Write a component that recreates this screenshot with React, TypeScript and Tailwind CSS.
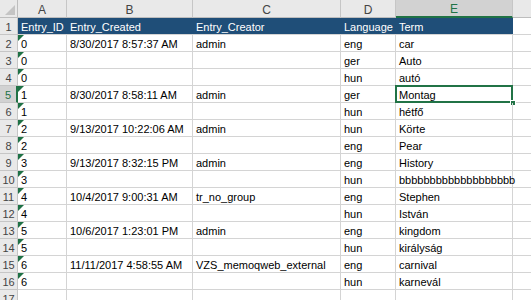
const cols = ['A', 'B', 'C', 'D', 'E']
const headers = ['Entry_ID', 'Entry_Created', 'Entry_Creator', 'Language', 'Term']

const rows: string[][] = [
  ['0', '8/30/2017 8:57:37 AM', 'admin', 'eng', 'car'],
  ['0', '', '', 'ger', 'Auto'],
  ['0', '', '', 'hun', 'autó'],
  ['1', '8/30/2017 8:58:11 AM', 'admin', 'ger', 'Montag'],
  ['1', '', '', 'hun', 'hétfő'],
  ['2', '9/13/2017 10:22:06 AM', 'admin', 'hun', 'Körte'],
  ['2', '', '', 'eng', 'Pear'],
  ['3', '9/13/2017 8:32:15 PM', 'admin', 'eng', 'History'],
  ['3', '', '', 'hun', 'bbbbbbbbbbbbbbbbbbb'],
  ['4', '10/4/2017 9:00:31 AM', 'tr_no_group', 'eng', 'Stephen'],
  ['4', '', '', 'hun', 'István'],
  ['5', '10/6/2017 1:23:01 PM', 'admin', 'eng', 'kingdom'],
  ['5', '', '', 'hun', 'királyság'],
  ['6', '11/11/2017 4:58:55 AM', 'VZS_memoqweb_external', 'eng', 'carnival'],
  ['6', '', '', 'hun', 'karnevál'],
]

const grid = 'grid grid-cols-[18px_49px_126px_148px_55px_117px_1fr]'
const cell = 'relative h-[17px] border-r border-b border-[#d4d4d4] px-[3px] flex items-end leading-[13px] whitespace-nowrap overflow-visible'

function ErrorFlag() {
  return (
    <svg className="absolute top-0 left-0" width="6" height="6" viewBox="0 0 6 6">
      <polygon points="0,0 6,0 0,6" fill="#1e7145" />
    </svg>
  )
}

function RowHeader({ n, selected }: { n: number; selected?: boolean }) {
  return (
    <div
      className={
        selected
          ? 'h-[17px] border-b border-r-2 border-b-[#c6c6c6] border-r-[#217346] bg-[#d2d2d2] text-[#217346] flex items-end justify-center leading-[13px]'
          : 'h-[17px] border-b border-r border-[#c6c6c6] bg-[#e9e9e9] text-[#444] flex items-end justify-center leading-[13px]'
      }
    >
      {n}
    </div>
  )
}

export default function App() {
  return (
    <div className="w-[531px] h-[300px] overflow-hidden bg-white font-['Liberation_Sans',Arial,sans-serif] text-[11px] text-black">
      {/* column letters */}
      <div className={grid}>
        <div className="relative h-[18px] border-r border-b border-[#bdbdbd] bg-[#e9e9e9]">
          <svg className="absolute right-[2px] bottom-[2px]" width="10" height="10" viewBox="0 0 10 10">
            <polygon points="10,0 10,10 0,10" fill="#c4c4c4" />
          </svg>
        </div>
        {cols.map((c) =>
          c === 'E' ? (
            <div
              key={c}
              className="h-[18px] border-r border-[#c6c6c6] border-b-2 border-b-[#217346] bg-[#d2d2d2] text-[#217346] flex items-center justify-center pt-[2px] text-[12px]"
            >
              {c}
            </div>
          ) : (
            <div
              key={c}
              className="h-[18px] border-r border-b border-[#c6c6c6] border-b-[#bdbdbd] bg-[#e9e9e9] text-[#444] flex items-center justify-center pt-[2px] text-[12px]"
            >
              {c}
            </div>
          )
        )}
        <div className="h-[18px] border-b border-[#bdbdbd] bg-[#e9e9e9]" />
      </div>

      {/* header row */}
      <div className={grid}>
        <RowHeader n={1} />
        {headers.map((h) => (
          <div
            key={h}
            className="h-[17px] border-b border-[#d4d4d4] bg-[#1f4e78] text-white px-[3px] flex items-end leading-[13px] whitespace-nowrap"
          >
            {h}
          </div>
        ))}
        <div className="h-[17px] border-b border-[#d4d4d4]" />
      </div>

      {rows.map((r, i) => {
        const n = i + 2
        return (
          <div key={n} className={grid}>
            <RowHeader n={n} selected={n === 5} />
            {r.map((v, j) => (
              <div key={j} className={cell}>
                {j === 0 && <ErrorFlag />}
                {v}
                {n === 5 && j === 4 && (
                  <>
                    <span className="absolute -left-[1px] -top-[1px] -right-[1px] -bottom-[1px] border-2 border-[#217346]" />
                    <span className="absolute -right-[4px] -bottom-[4px] w-[6px] h-[6px] bg-[#217346] border border-white" />
                  </>
                )}
              </div>
            ))}
            <div className="h-[17px] border-b border-[#d4d4d4]" />
          </div>
        )
      })}

      <div className={grid}>
        <RowHeader n={17} />
        <div className={cell} />
        <div className={cell} />
        <div className={cell} />
        <div className={cell} />
        <div className={cell} />
        <div className="h-[17px] border-b border-[#d4d4d4]" />
      </div>
    </div>
  )
}
